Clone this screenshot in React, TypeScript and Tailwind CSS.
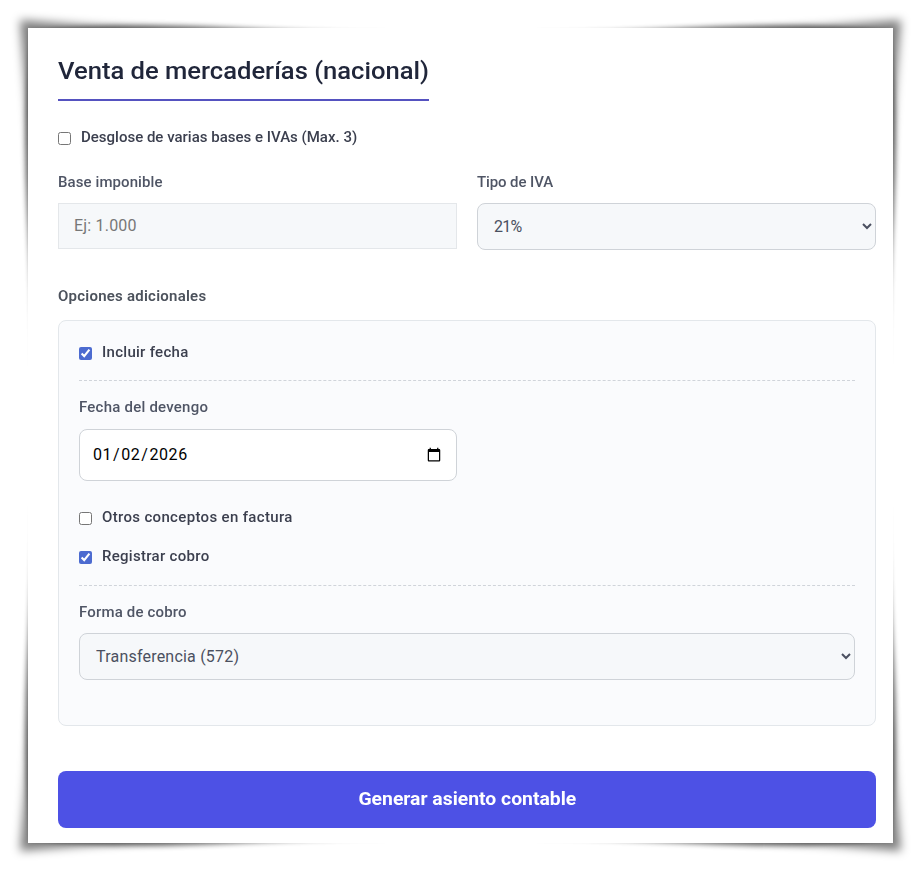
import type { ReactNode } from "react";

const selectClass =
  "block w-full rounded-lg border border-[#cfd3d8] bg-[#f6f8fa] px-3 text-base text-[#4b5060]";

function CurledShadow() {
  return (
    <svg className="pointer-events-none absolute inset-0" width="921" height="871" viewBox="0 0 921 871" aria-hidden="true">
      <defs>
        <filter id="wide" x="-5%" y="-5%" width="110%" height="110%">
          <feGaussianBlur stdDeviation="5" />
        </filter>
        <filter id="tight" x="-5%" y="-5%" width="110%" height="110%">
          <feGaussianBlur stdDeviation="2.5" />
        </filter>
      </defs>
      <path
        d="M20 20 Q460 58 901 20 Q863 435 901 851 Q460 813 20 851 Q58 435 20 20Z"
        fillOpacity="0.5"
        filter="url(#wide)"
      />
      <path
        d="M31 31 Q110 22 220 27 Q340 33 460 36 Q581 33 701 27 Q811 22 890 31 Q899 110 894 210 Q888 320 885 435 Q888 551 894 661 Q899 761 890 840 Q811 849 701 844 Q581 838 460 835 Q340 838 220 844 Q110 849 31 840 Q22 761 27 661 Q33 551 36 435 Q33 320 27 210 Q22 110 31 31Z"
        fillOpacity="0.5"
        filter="url(#tight)"
      />
    </svg>
  );
}

function Check({ label, checked = false, className = "" }: { label: string; checked?: boolean; className?: string }) {
  return (
    <label className={`flex h-5 items-center text-sm font-medium text-[#3b3f4e] ${className}`}>
      <input type="checkbox" defaultChecked={checked} className="relative top-px mr-[9.5px] size-[13px] accent-[#4c6bd0]" />
      <span className="origin-left scale-x-[1.072]">{label}</span>
    </label>
  );
}

function FieldLabel({ children, className = "" }: { children: ReactNode; className?: string }) {
  return (
    <div className={`h-5 origin-left scale-x-[1.07] text-sm leading-5 font-medium text-[#4f5565] ${className}`}>
      {children}
    </div>
  );
}

export default function App() {
  return (
    <div className="relative h-[871px] w-[921px] overflow-hidden bg-white p-7 font-[Roboto,sans-serif]">
      <CurledShadow />
      <main className="relative h-[815px] w-[865px] bg-white pt-6 pr-[17px] pl-[30px]">
        <h1 className="h-[49px] w-[371px] border-b-2 border-[#5552c0] text-2xl leading-[38px] font-medium whitespace-nowrap text-[#20263a]">
          <span className="inline-block origin-left scale-x-[1.066]">Venta de mercaderías (nacional)</span>
        </h1>

        <Check label="Desglose de varias bases e IVAs (Max. 3)" className="mt-[26px]" />

        <div className="mt-[25px] grid grid-cols-2 gap-5">
          <div>
            <FieldLabel className="tracking-[0.09px]">Base imponible</FieldLabel>
            <input
              placeholder="Ej: 1.000"
              className="mt-[11px] block h-[46px] w-full border border-[#e4e7ea] bg-[#f6f8fa] px-[15px] pb-0.5 text-base tracking-[0.193px] placeholder:text-[#777]"
            />
          </div>
          <div>
            <FieldLabel className="tracking-[-0.09px]">Tipo de IVA</FieldLabel>
            <select className={`mt-[11px] h-[47px] tracking-[-0.7px] ${selectClass}`}>
              <option>21%</option>
            </select>
          </div>
        </div>

        <div className="mt-9 h-5 origin-left scale-x-[1.07] text-sm leading-5 font-semibold tracking-[0.23px] text-[#4c525c]">
          Opciones adicionales
        </div>

        <section className="mt-[14px] h-[406px] rounded-lg border border-[#e3e7eb] bg-[#fafbfd] px-5 pt-[21px]">
          <Check label="Incluir fecha" checked className="tracking-[0.26px]" />
          <div className="mt-[18px] border-t border-dashed border-[#d0d4da] pt-4">
            <FieldLabel className="tracking-[0.22px]">Fecha del devengo</FieldLabel>
            <input
              type="date"
              defaultValue="2026-01-02"
              className="mt-3 block h-[52px] w-[378px] rounded-lg border border-[#cfd3d8] bg-white px-3 text-base tracking-[0.55px] text-black"
            />
          </div>
          <Check label="Otros conceptos en factura" className="mt-[26px] tracking-[0.31px]" />
          <Check label="Registrar cobro" checked className="mt-[19px] tracking-[0.27px]" />
          <div className="mt-[19px] border-t border-dashed border-[#d0d4da] pt-4">
            <FieldLabel className="tracking-[0.16px]">Forma de cobro</FieldLabel>
            <select className={`mt-[11px] h-[47px] tracking-[0.207px] ${selectClass}`}>
              <option>Transferencia (572)</option>
            </select>
          </div>
        </section>

        <button className="mt-[45px] h-[57px] w-full rounded-lg bg-[#4d51e5] pb-0.5 text-lg font-bold text-white">
          <span className="inline-block scale-x-[1.075]">Generar asiento contable</span>
        </button>
      </main>
    </div>
  );
}
